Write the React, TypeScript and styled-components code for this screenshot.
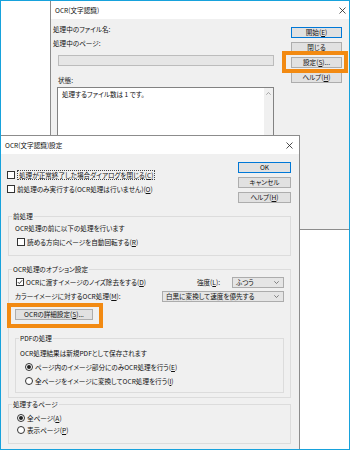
import styled, { createGlobalStyle } from 'styled-components'

const GlobalStyle = createGlobalStyle`
  html, body {
    margin: 0;
    padding: 0;
    background: #fff;
  }
  body {
    font-family: "Noto Sans CJK JP", "Noto Sans", sans-serif;
  }
`

const Screen = styled.div`
  position: relative;
  width: 350px;
  height: 450px;
  box-sizing: border-box;
  border: 1px solid #17a2dc;
  background: #fff;
  overflow: hidden;
  font-size: 6.6px;
  font-feature-settings: "palt";
  line-height: 1;
  color: #111;
`

// windows sit on a desktop, so they are placed by coordinates
const Window = styled.div<{ $left: number; $top: number; $width: number; $height: number }>`
  position: absolute;
  left: ${p => p.$left}px;
  top: ${p => p.$top}px;
  width: ${p => p.$width}px;
  height: ${p => p.$height}px;
  box-sizing: border-box;
  border: 1px solid #8c8c8c;
  background: #f0f0f0;
  display: flex;
  flex-direction: column;
`

const TitleBar = styled.div`
  height: 18px;
  flex: none;
  background: #fff;
  display: flex;
  align-items: center;
  justify-content: space-between;
  padding: 0 6px 0 4px;
`

const U = styled.span`
  text-decoration: underline;
`

const Button = styled.button<{ $width: number; $primary?: boolean }>`
  width: ${p => p.$width}px;
  height: 11px;
  box-sizing: border-box;
  padding: 0;
  margin: 0;
  font: inherit;
  color: inherit;
  border: 1px solid ${p => (p.$primary ? '#0078d7' : '#adadad')};
  background: #e1e1e1;
  display: flex;
  align-items: center;
  justify-content: center;
  white-space: nowrap;
`

const ButtonColumn = styled.div<{ $top: number }>`
  display: flex;
  flex-direction: column;
  gap: 4px;
  margin-top: ${p => p.$top}px;
`

// orange annotation frame drawn over the UI
const Highlight = styled.div<{ $t: number; $r: number; $b: number; $l: number }>`
  position: relative;
  width: fit-content;
  &::after {
    content: '';
    position: absolute;
    top: -${p => p.$t}px;
    right: -${p => p.$r}px;
    bottom: -${p => p.$b}px;
    left: -${p => p.$l}px;
    border: 4px solid #f28a12;
    pointer-events: none;
  }
`

/* ---------- back window ---------- */

const ProgressBody = styled.div`
  display: flex;
  gap: 18px;
  padding: 3px 8px 0 2px;
`

const ProgressMain = styled.div`
  width: 220px;
  display: flex;
  flex-direction: column;
`

const Label = styled.div<{ $indent?: number; $top?: number }>`
  height: 14px;
  display: flex;
  align-items: center;
  padding-left: ${p => p.$indent ?? 0}px;
  margin-top: ${p => p.$top ?? 0}px;
  white-space: nowrap;
`

const ProgressBar = styled.div`
  width: 216px;
  height: 11px;
  box-sizing: border-box;
  margin: 5px 0 0 5px;
  border: 1px solid #bcbcbc;
  background: #e6e6e6;
`

const StatusBox = styled.div`
  width: 217px;
  height: 150px;
  box-sizing: border-box;
  margin-left: 4px;
  border: 1px solid #828282;
  background: #fff;
  display: flex;
`

const StatusText = styled.div`
  flex: 1;
  padding: 2px 4px;
  line-height: 9px;
  white-space: nowrap;
`

const ScrollTrack = styled.div`
  width: 9px;
  background: #f0f0f0;
  display: flex;
  justify-content: center;
  padding-top: 4px;
`

/* ---------- front window ---------- */

const DialogBody = styled.div`
  padding: 8px 8px 0 7px;
  display: flex;
  flex-direction: column;
`

const TopSection = styled.div`
  display: flex;
  justify-content: space-between;
  align-items: flex-start;
`

const OptionColumn = styled.div`
  padding-top: 6px;
  margin-left: -1px;
`

const Row = styled.div<{ $h?: number; $indent?: number }>`
  display: flex;
  align-items: center;
  gap: 2px;
  height: ${p => p.$h ?? 14}px;
  padding-left: ${p => p.$indent ?? 0}px;
  white-space: nowrap;
`

const Spacer = styled.div`
  flex: 1;
`

const Focus = styled.span`
  border: 1px dotted #444;
  padding: 0 1px;
  line-height: 8px;
`

const Group = styled.fieldset<{ $top: number; $pad: number; $bottom: number; $ptop: number; $right?: number }>`
  margin: ${p => p.$top}px 0 0 0;
  padding: ${p => p.$ptop}px ${p => p.$right ?? 6}px ${p => p.$bottom}px ${p => p.$pad}px;
  border: 1px solid #dcdcdc;
  min-width: 0;
`

const Legend = styled.legend<{ $shift: number }>`
  padding: 0 1px;
  margin-left: ${p => p.$shift}px;
  height: 8px;
  line-height: 8px;
  white-space: nowrap;
`

const Box = styled.span<{ $round?: boolean }>`
  width: 8px;
  height: 8px;
  box-sizing: border-box;
  border: 1px solid #333;
  background: #fff;
  border-radius: ${p => (p.$round ? '50%' : '0')};
  display: inline-flex;
  align-items: center;
  justify-content: center;
  flex: none;
`

const Dot = styled.span`
  width: 4px;
  height: 4px;
  border-radius: 50%;
  background: #222;
`

const Select = styled.div<{ $width: number }>`
  width: ${p => p.$width}px;
  height: 11px;
  box-sizing: border-box;
  border: 1px solid #acacac;
  background: #e5e5e5;
  display: flex;
  align-items: center;
  justify-content: space-between;
  padding: 0 4px 0 3px;
`

const CloseIcon = () => (
  <svg width="7" height="7" viewBox="0 0 7 7">
    <path d="M0.5 0.5L6.5 6.5M6.5 0.5L0.5 6.5" stroke="#222" strokeWidth="0.8" fill="none" />
  </svg>
)

const Chevron = () => (
  <svg width="5" height="3" viewBox="0 0 5 3">
    <path d="M0.3 0.3L2.5 2.5L4.7 0.3" stroke="#555" strokeWidth="0.7" fill="none" />
  </svg>
)

const UpArrow = () => (
  <svg width="5" height="3" viewBox="0 0 5 3">
    <path d="M0.3 2.7L2.5 0.5L4.7 2.7" stroke="#888" strokeWidth="0.7" fill="none" />
  </svg>
)

const Check = ({ checked }: { checked?: boolean }) => (
  <Box>
    {checked && (
      <svg width="6" height="6" viewBox="0 0 6 6">
        <path d="M0.8 3.1L2.3 4.6L5.2 1.2" stroke="#222" strokeWidth="0.9" fill="none" />
      </svg>
    )}
  </Box>
)

const Radio = ({ checked }: { checked?: boolean }) => <Box $round>{checked && <Dot />}</Box>

const App = () => {
  return (
    <Screen>
      <GlobalStyle />

      <Window $left={49} $top={-1} $width={303} $height={230}>
        <TitleBar>
          <span>OCR(文字認識)</span>
          <CloseIcon />
        </TitleBar>
        <ProgressBody>
          <ProgressMain>
            <Label>処理中のファイル名:</Label>
            <Label>処理中のページ:</Label>
            <ProgressBar />
            <Label $indent={5} $top={7}>状態:</Label>
            <StatusBox>
              <StatusText>処理するファイル数は 1 です。</StatusText>
              <ScrollTrack>
                <UpArrow />
              </ScrollTrack>
            </StatusBox>
          </ProgressMain>
          <ButtonColumn $top={5}>
            <Button $width={51} $primary>開始(<U>E</U>)</Button>
            <Button $width={51}>閉じる</Button>
            <Highlight $t={6} $r={6} $b={5} $l={9}>
              <Button $width={51}>設定(<U>S</U>)...</Button>
            </Highlight>
            <Button $width={51}>ヘルプ(<U>H</U>)</Button>
          </ButtonColumn>
        </ProgressBody>
      </Window>

      <Window $left={-1} $top={134} $width={300} $height={320}>
        <TitleBar>
          <span>OCR(文字認識)設定</span>
          <CloseIcon />
        </TitleBar>
        <DialogBody>
          <TopSection>
            <OptionColumn>
              <Row>
                <Check />
                <Focus>処理が正常終了した場合ダイアログを閉じる(<U>C</U>)</Focus>
              </Row>
              <Row>
                <Check />
                <span>前処理のみ実行する(OCR処理は行いません)(<U>O</U>)</span>
              </Row>
            </OptionColumn>
            <ButtonColumn $top={0}>
              <Button $width={53} $primary>OK</Button>
              <Button $width={53}>キャンセル</Button>
              <Button $width={53}>ヘルプ(<U>H</U>)</Button>
            </ButtonColumn>
          </TopSection>

          <Group $top={9} $pad={6} $ptop={1} $bottom={6}>
            <Legend $shift={-3}>前処理</Legend>
            <Row>OCR処理の前に以下の処理を行います</Row>
            <Row $indent={2}>
              <Check />
              <span>読める方向にページを自動回転する(<U>R</U>)</span>
            </Row>
          </Group>

          <Group $top={9} $pad={6} $ptop={2} $bottom={4}>
            <Legend $shift={-3}>OCR処理のオプション設定</Legend>
            <Row $indent={1}>
              <Check checked />
              <span>OCRに渡すイメージのノイズ除去をする(<U>D</U>)</span>
              <Spacer />
              <span>強度(<U>L</U>):</span>
              <Select $width={52} style={{ marginLeft: 10 }}>
                <span>ふつう</span>
                <Chevron />
              </Select>
            </Row>
            <Row>
              <span>カラーイメージに対するOCR処理(<U>M</U>):</span>
              <Spacer />
              <Select $width={122}>
                <span>白黒に変換して速度を優先する</span>
                <Chevron />
              </Select>
            </Row>
            <Highlight $t={6} $r={10} $b={8} $l={8} style={{ marginTop: 6 }}>
              <Button $width={78}>OCRの詳細設定(<U>S</U>)...</Button>
            </Highlight>
            <Group $top={14} $pad={4} $ptop={4} $bottom={4} $right={4}>
              <Legend $shift={-1}>PDFの処理</Legend>
              <Row>OCR処理結果は新規PDFとして保存されます</Row>
              <Row $indent={5}>
                <Radio checked />
                <span>ページ内のイメージ部分にのみOCR処理を行う(<U>E</U>)</span>
              </Row>
              <Row $indent={5}>
                <Radio />
                <span>全ページをイメージに変換してOCR処理を行う(<U>I</U>)</span>
              </Row>
            </Group>
          </Group>

          <Group $top={2} $pad={6} $ptop={4} $bottom={7}>
            <Legend $shift={-3}>処理するページ</Legend>
            <Row $h={12} $indent={2}>
              <Radio checked />
              <span>全ページ(<U>A</U>)</span>
            </Row>
            <Row $h={12} $indent={2}>
              <Radio />
              <span>表示ページ(<U>P</U>)</span>
            </Row>
          </Group>
        </DialogBody>
      </Window>
    </Screen>
  )
}

export default App
